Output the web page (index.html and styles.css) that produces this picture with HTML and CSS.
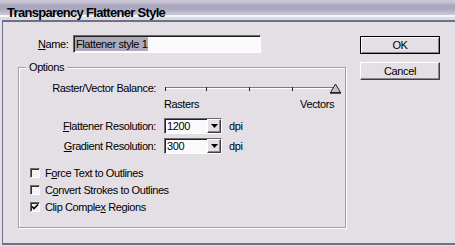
FILE: index.html
```html
<!DOCTYPE html>
<html lang="en">
<head>
    <meta charset="UTF-8">
    <title>Transparency Flattener Style</title>
    <link rel="stylesheet" href="styles.css">
</head>
<body>
    <div class="window">
        <div class="titlebar">Transparency Flattener Style</div>
        <div class="frame">
            <div class="dialog">
                <div class="main">
                    <div class="name-row">
                        <label class="name-label"><u>N</u>ame:</label>
                        <div class="textbox"><span class="sel">Flattener style 1</span></div>
                    </div>

                    <fieldset class="group">
                        <legend>Options</legend>

                        <div class="row slider-row">
                            <div class="lbl">Raster/Vector Balance:</div>
                            <svg class="slider" width="178" height="14" viewBox="0 0 178 14">
                                <line x1="1" y1="6.5" x2="172" y2="6.5" stroke="#7c7a84" stroke-width="1"/>
                                <line x1="1" y1="7.5" x2="172" y2="7.5" stroke="#ffffff" stroke-width="1"/>
                                <g stroke="#202020" stroke-width="1">
                                    <line x1="1.5" y1="6" x2="1.5" y2="10"/>
                                    <line x1="42.5" y1="6" x2="42.5" y2="10"/>
                                    <line x1="85.5" y1="6" x2="85.5" y2="10"/>
                                    <line x1="128.5" y1="6" x2="128.5" y2="10"/>
                                    <line x1="171.5" y1="6" x2="171.5" y2="10"/>
                                </g>
                                <path d="M171.5 3 L176.5 11.5 L166.5 11.5 Z" fill="#c4c0c8" stroke="#202020" stroke-width="1"/>
                                <line x1="166" y1="12" x2="177" y2="12" stroke="#202020" stroke-width="1.5"/>
                            </svg>
                        </div>

                        <div class="row scale-row">
                            <span>Rasters</span>
                            <span>Vectors</span>
                        </div>

                        <div class="row combo-row first">
                            <div class="lbl"><u>F</u>lattener Resolution:</div>
                            <div class="combo">
                                <span class="val">1200</span>
                                <span class="drop"><svg width="7" height="4" viewBox="0 0 7 4"><path d="M0 0 H7 L3.5 4 Z" fill="#000"/></svg></span>
                            </div>
                            <span class="unit">dpi</span>
                        </div>

                        <div class="row combo-row">
                            <div class="lbl"><u>G</u>radient Resolution:</div>
                            <div class="combo">
                                <span class="val">300</span>
                                <span class="drop"><svg width="7" height="4" viewBox="0 0 7 4"><path d="M0 0 H7 L3.5 4 Z" fill="#000"/></svg></span>
                            </div>
                            <span class="unit">dpi</span>
                        </div>

                        <div class="checks">
                            <label class="check"><span class="box"></span><span>F<u>o</u>rce Text to Outlines</span></label>
                            <label class="check"><span class="box"></span><span>C<u>o</u>nvert Strokes to Outlines</span></label>
                            <label class="check"><span class="box checked"><svg width="8" height="8" viewBox="0 0 8 8"><path d="M1 3.5 L3 5.5 L7 1.5" fill="none" stroke="#000" stroke-width="1.6"/></svg></span><span>Clip Comple<u>x</u> Regions</span></label>
                        </div>
                    </fieldset>
                </div>

                <div class="buttons">
                    <div class="btn btn-default"><span>OK</span></div>
                    <div class="btn"><span>Cancel</span></div>
                </div>
            </div>
        </div>
    </div>
</body>
</html>
```

FILE: styles.css
```css
body {
    margin: 0;
    background-color: #e4dfe4;
    font-family: "Liberation Sans", Arial, sans-serif;
    font-size: 11px;
    letter-spacing: -0.4px;
    color: #000;
}

.window {
    width: 455px;
    height: 246px;
    overflow: hidden;
}

.titlebar {
    height: 20px;
    box-sizing: border-box;
    padding: 6px 0 0 7px;
    font-size: 13px;
    line-height: 13px;
    font-weight: bold;
    letter-spacing: -0.7px;
    overflow: hidden;
    background: linear-gradient(#cbc7d5 0, #c4c0d0 3px, #aba9c1 5px, #a9a8c0 9px, #bbbbcc 12px, #cacad8 15px, #f6f6f8 15px, #f6f6f8 17px, #dcdbe4 17px);
}

.frame {
    margin-left: 2px;
    height: 221px;
    border-left: 1px solid #6c7088;
    border-top: 2px solid #6c7088;
    border-bottom: 2px solid #6c7088;
}

.dialog {
    display: flex;
    padding: 13px 0 0 15px;
}

.main {
    width: 328px;
}

.name-row {
    display: flex;
    align-items: center;
    height: 18px;
    padding-left: 20px;
}

.name-label {
    width: 35px;
}

.textbox {
    width: 188px;
    height: 18px;
    box-sizing: border-box;
    display: flex;
    align-items: center;
    padding-left: 1px;
    background-color: #fbfafb;
    border: 1px solid;
    border-color: #6a6a70 #ffffff #ffffff #6a6a70;
    box-shadow: inset 1px 1px 0 #202020;
}

.sel {
    background-color: #aeaabd;
    line-height: 14px;
    padding: 0 1px;
}

.group {
    margin: 8px 0 0;
    padding: 0 0 13px;
    width: 328px;
    box-sizing: border-box;
    min-width: 0;
    border: 1px solid #a29eaa;
    box-shadow: inset 1px 1px 0 #fff, 1px 1px 0 #fff;
}

.group legend {
    margin-left: 7px;
    padding: 0 3px;
    line-height: 13px;
    background-color: #e4dfe4;
}

.row {
    display: flex;
    align-items: center;
}

.lbl {
    width: 145px;
    box-sizing: border-box;
    padding-right: 8px;
    text-align: right;
    flex-shrink: 0;
}

.slider-row {
    height: 14px;
    margin-top: 7px;
}

.scale-row {
    height: 14px;
    margin-top: 2px;
    margin-left: 145px;
    width: 170px;
    justify-content: space-between;
}

.combo-row {
    height: 16px;
    margin-top: 4px;
}

.combo-row.first {
    margin-top: 7px;
}

.combo {
    width: 58px;
    height: 16px;
    box-sizing: border-box;
    display: flex;
    align-items: stretch;
    background-color: #fbfafb;
    border: 1px solid;
    border-color: #6a6a70 #ffffff #ffffff #6a6a70;
    box-shadow: inset 1px 1px 0 #202020;
}

.combo .val {
    flex: 1;
    padding-left: 2px;
    line-height: 14px;
}

.combo .drop {
    width: 14px;
    display: flex;
    align-items: center;
    justify-content: center;
    box-sizing: border-box;
    background-color: #e4dfe4;
    border: 1px solid;
    border-color: #ffffff #404040 #404040 #ffffff;
    box-shadow: inset -1px -1px 0 #8a8690;
}

.unit {
    margin-left: 7px;
}

.checks {
    margin-top: 12px;
    padding-left: 11px;
    display: flex;
    flex-direction: column;
    gap: 3px;
}

.check {
    display: flex;
    align-items: center;
    height: 14px;
}

.box {
    width: 10px;
    height: 10px;
    box-sizing: border-box;
    margin-right: 5px;
    display: flex;
    align-items: center;
    justify-content: center;
    background-color: #f4f2f4;
    border: 1px solid;
    border-color: #6a6a70 #ffffff #ffffff #6a6a70;
    box-shadow: inset 1px 1px 0 #303030;
}

.buttons {
    margin-left: 14px;
    padding-top: 1px;
    display: flex;
    flex-direction: column;
    gap: 8px;
}

.btn {
    width: 80px;
    height: 18px;
    box-sizing: border-box;
    display: flex;
    align-items: center;
    justify-content: center;
    border: 1px solid;
    border-color: #ffffff #404040 #404040 #ffffff;
    box-shadow: inset -1px -1px 0 #8a8690;
}

.btn-default {
    border: 1px solid #000;
    box-shadow: inset 1px 1px 0 #fff, inset -1px -1px 0 #8a8690;
}
```
